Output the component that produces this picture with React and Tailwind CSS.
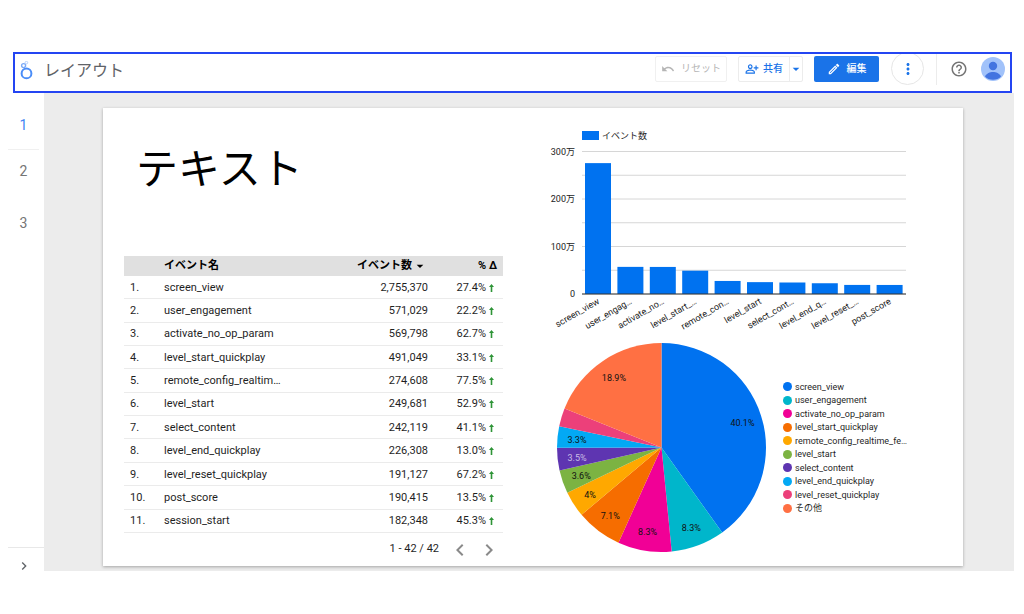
import { useState } from "react";
import {
  MdArrowDropDown,
  MdChevronLeft,
  MdChevronRight,
  MdHelpOutline,
  MdMoreVert,
  MdOutlineEdit,
  MdOutlinePersonAddAlt,
  MdUndo,
} from "react-icons/md";

const events = [
  { name: "screen_view", count: 2755370, delta: "27.4%" },
  { name: "user_engagement", count: 571029, delta: "22.2%" },
  { name: "activate_no_op_param", count: 569798, delta: "62.7%" },
  { name: "level_start_quickplay", count: 491049, delta: "33.1%" },
  { name: "remote_config_realtim…", count: 274608, delta: "77.5%" },
  { name: "level_start", count: 249681, delta: "52.9%" },
  { name: "select_content", count: 242119, delta: "41.1%" },
  { name: "level_end_quickplay", count: 226308, delta: "13.0%" },
  { name: "level_reset_quickplay", count: 191127, delta: "67.2%" },
  { name: "post_score", count: 190415, delta: "13.5%" },
  { name: "session_start", count: 182348, delta: "45.3%" },
];

const barLabels = [
  "screen_view",
  "user_engag…",
  "activate_no…",
  "level_start_…",
  "remote_con…",
  "level_start",
  "select_cont…",
  "level_end_q…",
  "level_reset_…",
  "post_score",
];

const slices = [
  { name: "screen_view", value: 40.1, label: "40.1%", color: "#0072f0" },
  { name: "user_engagement", value: 8.3, label: "8.3%", color: "#00b6cb" },
  { name: "activate_no_op_param", value: 8.3, label: "8.3%", color: "#f10096" },
  { name: "level_start_quickplay", value: 7.1, label: "7.1%", color: "#f66d00" },
  { name: "remote_config_realtime_fe…", value: 4, label: "4%", color: "#ffa800" },
  { name: "level_start", value: 3.6, label: "3.6%", color: "#7cb342" },
  { name: "select_content", value: 3.5, label: "3.5%", color: "#5e35b1", text: "#c9bde4" },
  { name: "level_end_quickplay", value: 3.3, label: "3.3%", color: "#03a9f4" },
  { name: "level_reset_quickplay", value: 2.8, label: "", color: "#ec407a" },
  { name: "その他", value: 18.9, label: "18.9%", color: "#ff7043" },
];

const Logo = () => (
  <svg viewBox="0 0 14 20" className="h-5 w-[14px]" fill="none">
    <circle cx="7.5" cy="12.4" r="4.900" stroke="#4a8df8" strokeWidth="2" />
    <circle cx="4.6" cy="4.6" r="2" stroke="#7baaf7" strokeWidth="1.4" />
    <circle cx="7.4" cy="1.600" r="1.3" stroke="#b5cffb" strokeWidth="1" />
  </svg>
);

const Header = () => (
  <header className="ml-[13px] mr-3 flex h-[41px] items-start justify-between pl-[6px] pr-[7px] outline-2 -outline-offset-2 outline-[#2445f2]">
    <div className="flex h-[38px] items-center gap-[11px]">
      <Logo />
      <h1 className="text-base leading-5 text-[#5f6368]">レイアウト</h1>
    </div>
    <div className="flex h-[33px] items-center">
      <button
        type="button"
        disabled
        className="flex h-[26px] w-[72px] items-center justify-center gap-[6px] rounded-xs border border-[#f0f0f0] text-[10px] text-[#b5b5b5]"
      >
        <MdUndo className="size-[14px]" />
        リセット
      </button>
      <div className="ml-[11px] flex h-[26px] rounded-xs border border-[#ececec] text-[#1a73e8]">
        <button type="button" className="flex w-[50px] items-center justify-center gap-1 text-[10px] font-medium">
          <MdOutlinePersonAddAlt className="size-[14px]" />
          共有
        </button>
        <button type="button" aria-label="共有オプション" className="flex w-[13px] items-center justify-center border-l border-[#ececec]">
          <MdArrowDropDown className="size-4 shrink-0" />
        </button>
      </div>
      <button
        type="button"
        className="ml-[11px] flex h-[26px] w-[65px] items-center justify-center gap-[6px] rounded-xs bg-[#1a73e8] text-[10px] font-medium text-white"
      >
        <MdOutlineEdit className="size-[14px]" />
        編集
      </button>
      <button
        type="button"
        aria-label="その他のオプション"
        className="ml-3 flex size-[33px] items-center justify-center rounded-full border border-[#e6e6e6] text-[#1a73e8]"
      >
        <MdMoreVert className="size-[18px]" />
      </button>
      <div className="ml-3 mr-[13px] h-8 w-px bg-[#ececec]"></div>
      <button type="button" aria-label="ヘルプ" className="text-[#757575]">
        <MdHelpOutline className="size-[18px]" />
      </button>
      <button
        type="button"
        aria-label="アカウント"
        className="ml-[13px] flex size-6 items-center justify-center overflow-hidden rounded-full bg-[#a1c2fa]"
      >
        <svg viewBox="0 0 24 24" className="size-6" fill="#4374e0">
          <circle cx="12" cy="9" r="4.2" />
          <path d="M4 19.5C5.500 16.2 9 15 12 15s6.500 1.200 8 4.500C18 21.600 15.200 22.800 12 22.800S6 21.600 4 19.500z" />
        </svg>
      </button>
    </div>
  </header>
);

const Sidebar = ({ page, setPage }) => (
  <nav className="flex w-11 shrink-0 flex-col pl-2 text-sm leading-5">
    <ul className="mr-[5px]">
      {[1, 2, 3].map((n) => (
        <li key={n} className={n === 1 ? "border-b border-[#f0f0f0] pb-[14px] pt-[22px]" : n === 2 ? "pt-[11px]" : "pt-8"}>
          <button
            type="button"
            onClick={() => setPage(n)}
            className={page === n ? "block w-full text-center text-[#4285f4]" : "block w-full text-center text-[#757575]"}
          >
            {n}
          </button>
        </li>
      ))}
    </ul>
    <button
      type="button"
      aria-label="ページを開く"
      className="mt-auto flex h-6 items-end justify-center border-t border-[#e8e8e8] pr-1 text-[#5f6368]"
    >
      <MdChevronRight className="-mb-[3px] size-4" />
    </button>
  </nav>
);

const EventTable = () => (
  <div>
    <table className="h-[277px] w-full table-fixed text-[11px] leading-4 text-[#1f1f1f]">
      <colgroup>
        <col className="w-[40px]" />
        <col />
        <col className="w-[110px]" />
        <col className="w-[75px]" />
      </colgroup>
      <thead>
        <tr className="h-5 bg-[#e0e0e0] text-black">
          <th className="p-0"></th>
          <th className="p-0 text-left font-bold">イベント名</th>
          <th className="p-0 font-bold">
            <span className="flex items-center justify-end whitespace-nowrap">
              イベント数
              <MdArrowDropDown className="size-4" />
            </span>
          </th>
          <th className="py-0 pl-0 pr-[6px] text-right font-bold">% Δ</th>
        </tr>
      </thead>
      <tbody>
        {events.map((event, i) => (
          <tr key={event.name} className="border-b border-[#ebebeb]">
            <td className="pb-0 pl-[6px] pr-0 pt-px">{i + 1}.</td>
            <td className="px-0 pb-0 pt-px">{event.name}</td>
            <td className="px-0 pb-0 pt-px text-right">{event.count.toLocaleString("en-US")}</td>
            <td className="pb-0 pl-0 pr-[9px] pt-px">
              <span className="flex items-center justify-end gap-[3px]">
                {event.delta}
                <svg viewBox="0 0 5 8" className="h-2 w-[5px]" fill="#2e9437">
                  <path d="M2.500 0L5 3H3.300V8H1.700V3H0z" />
                </svg>
              </span>
            </td>
          </tr>
        ))}
      </tbody>
    </table>
    <div className="flex h-[33px] items-center justify-end pr-[2px] text-[11px] text-[#1f1f1f]">
      <span>1 - 42 / 42</span>
      <button type="button" aria-label="前へ" className="ml-[9px] text-[#8a8a8a]">
        <MdChevronLeft className="size-6" />
      </button>
      <button type="button" aria-label="次へ" className="ml-[5px] text-[#8a8a8a]">
        <MdChevronRight className="size-6" />
      </button>
    </div>
  </div>
);

const BarChart = () => {
  const left = 37;
  const bottom = 170;
  const step = 32.4;
  const toHeight = (count) => (count / 3000000) * 142.5;

  return (
    <svg viewBox="0 0 370 210" className="w-full" fontSize="9">
      <rect x={left} y="7" width="17" height="9" fill="#0072f0" />
      <text x="57" y="15" fill="#222">イベント数</text>
      {[0, 1, 2, 3, 4, 5, 6].map((n) => (
        <line
          key={n}
          x1={left}
          x2="361"
          y1={bottom - n * 23.75}
          y2={bottom - n * 23.75}
          stroke="#d6d6d6"
          strokeWidth="1"
        />
      ))}
      {["0", "100万", "200万", "300万"].map((tick, n) => (
        <text key={tick} x="30" y={bottom + 3 - n * 47.5} textAnchor="end" fill="#222">
          {tick}
        </text>
      ))}
      {barLabels.map((label, i) => {
        const height = toHeight(events[i].count);
        const x = left + 3 + i * step;
        return (
          <g key={label}>
            <rect x={x} y={bottom - height} width="26" height={height} fill="#0072f0" />
            <text
              x={x + 15}
              y={bottom + 9}
              textAnchor="end"
              fill="#222"
              transform={`rotate(-30 ${x + 15} ${bottom + 9})`}
            >
              {label}
            </text>
          </g>
        );
      })}
      <line x1={left} x2="361" y1={bottom} y2={bottom} stroke="#333" strokeWidth="1" />
    </svg>
  );
};

const PieChart = () => {
  const total = slices.reduce((sum, s) => sum + s.value, 0);
  const point = (share, r) => {
    const angle = share * 2 * Math.PI;
    return [105.5 + r * Math.sin(angle), 105.5 - r * Math.cos(angle)];
  };
  let start = 0;

  return (
    <svg viewBox="0 0 211 211" className="w-[211px] shrink-0" fontSize="9">
      {slices.map((slice) => {
        const end = start + slice.value / total;
        const [x1, y1] = point(start, 104.5);
        const [x2, y2] = point(end, 104.5);
        const [tx, ty] = point((start + end) / 2, 85);
        start = end;
        return (
          <g key={slice.name}>
            <path d={`M105.5 105.5L${x1} ${y1}A104.5 104.5 0 0 1 ${x2} ${y2}Z`} fill={slice.color} />
            <text x={tx} y={ty + 4} textAnchor="middle" fill={slice.text || "#111"}>
              {slice.label}
            </text>
          </g>
        );
      })}
    </svg>
  );
};

const Legend = () => (
  <ul className="flex h-[134px] flex-col justify-between text-[9px] leading-3 text-[#1f1f1f]">
    {slices.map((slice) => (
      <li key={slice.name} className="flex items-center gap-[3px] whitespace-nowrap">
        <span className="size-[9px] rounded-full" style={{ backgroundColor: slice.color }}></span>
        {slice.name}
      </li>
    ))}
  </ul>
);

const App = () => {
  const [page, setPage] = useState(1);

  return (
    <div className="min-h-screen bg-white pt-[52px] font-[Roboto,'Noto_Sans_CJK_JP',sans-serif]">
      <Header />
      <div className="mr-[10px] flex">
        <Sidebar page={page} setPage={setPage} />
        <main className="flex-1 bg-[#ececec] pb-[5px] pl-[59px] pr-[51px] pt-[15px]">
          <section className="grid grid-cols-[379fr_370fr] gap-[42px] bg-white pl-[21px] pr-12 shadow-[0_1px_3px_rgba(0,0,0,0.3)]">
            <div className="pt-[38px]">
              <h2 className="mb-[62px] pl-3 text-[42px] leading-[48px] text-black">テキスト</h2>
              <EventTable />
            </div>
            <div className="pt-4">
              <BarChart />
              <div className="ml-[11px] mt-2 flex items-center gap-4">
                <PieChart />
                <Legend />
              </div>
            </div>
          </section>
        </main>
      </div>
    </div>
  );
};

export default App;
